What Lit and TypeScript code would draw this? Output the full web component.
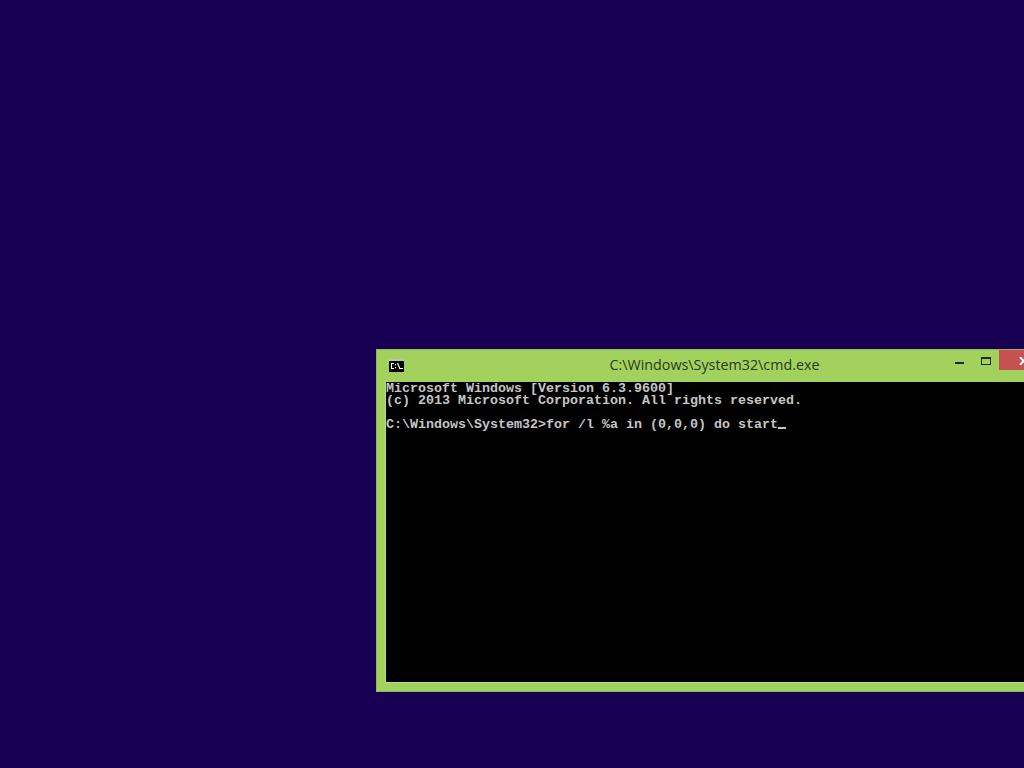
import { LitElement, html, css } from "lit";
import { customElement } from "lit/decorators.js";

@customElement("app-root")
export class AppRoot extends LitElement {
  static styles = css`
    :host { display: block; width: 1024px; height: 768px; background: #180052; position: relative; overflow: hidden; }
    .window { position: absolute; left: 376px; top: 349px; width: 677px; height: 343px; box-sizing: border-box;
      background: #a3d15d; border: 1px solid #8fb75c; display: flex; flex-direction: column; padding: 0 9px 9px 9px; }
    .titlebar { height: 32px; flex: none; display: flex; align-items: center; position: relative; }
    .icon { position: absolute; left: 3px; top: 9px; width: 15px; height: 13px; }
    .title { flex: 1; text-align: center; font: 14.3px/30px "Open Sans", "Noto Sans", sans-serif; color: #2c3a20; height: 32px; }
    .btn { position: absolute; }
    .min { left: 569px; top: 12px; width: 9px; height: 2px; background: #1e2e14; }
    .max { left: 595px; top: 7px; width: 10px; height: 8px; box-sizing: border-box; border: 1px solid #1e2e14; border-top-width: 2px; }
    .close { left: 613px; top: 0; width: 45px; height: 20px; background: #c75050; }
    .close svg { position: absolute; left: 20px; top: 7px; width: 9px; height: 8px; }
    .console { flex: 1; box-sizing: border-box; padding-top: 1px; background: #000; box-shadow: -1px 0 0 #b9dc84, 0 1px 0 #b9dc84, -1px 1px 0 #b9dc84; color: #c6c6c6; font: bold 13.33px/12px "Liberation Mono", monospace; }
    .line { height: 12px; white-space: pre; }
    .cursor { display: inline-block; width: 8px; height: 2px; background: #c6c6c6; vertical-align: -1px; }
  `;

  render() {
    return html`
      <div class="window">
        <div class="titlebar">
          <svg class="icon" viewBox="0 0 15 13">
            <rect x="0" y="0" width="15" height="13" fill="#000"/>
            <rect x="0" y="0" width="15" height="2" fill="#b8c4a8"/>
            <path d="M5 4.5H2.5v5H5M6.5 5v1.2M6.5 8v1.2M8.5 4l2.5 6M11 9.5h3" stroke="#fff" stroke-width="1.1" fill="none"/>
          </svg>
          <div class="title">C:\\Windows\\System32\\cmd.exe</div>
          <div class="btn min"></div>
          <div class="btn max"></div>
          <div class="btn close"><svg viewBox="0 0 9 8"><path d="M1 0l7 8M8 0L1 8" stroke="#fff" stroke-width="2" fill="none"/></svg></div>
        </div>
        <div class="console">
          <div class="line">Microsoft Windows [Version 6.3.9600]</div>
          <div class="line">(c) 2013 Microsoft Corporation. All rights reserved.</div>
          <div class="line"></div>
          <div class="line">C:\\Windows\\System32>for /l %a in (0,0,0) do start<span class="cursor"></span></div>
        </div>
      </div>
    `;
  }
}
